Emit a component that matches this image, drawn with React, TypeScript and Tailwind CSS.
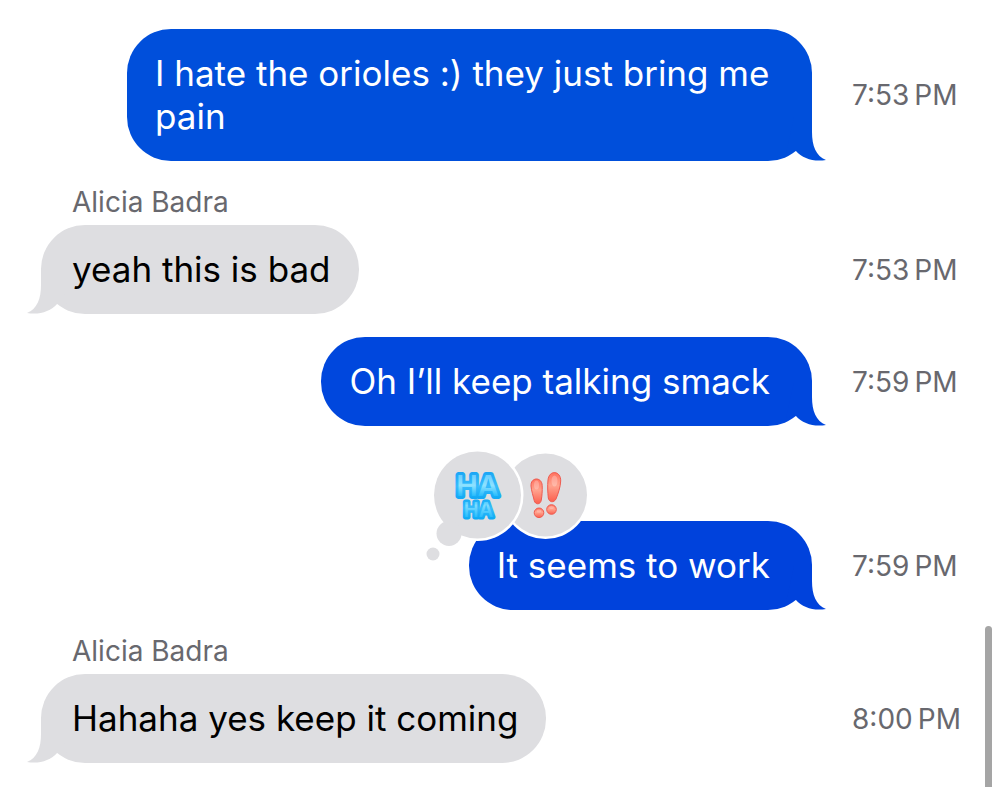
import type { ReactNode } from "react";

type Side = "sent" | "received";

interface Message {
  id: number;
  side: Side;
  text: string;
  time: string;
  author?: string;
  tone: string;
  reacted?: boolean;
}

const messages: Message[] = [
  {
    id: 1,
    side: "sent",
    text: "I hate the orioles :) they just bring me pain",
    time: "7:53\u202fPM",
    tone: "bg-[#004fdb] text-[#004fdb]",
  },
  {
    id: 2,
    side: "received",
    author: "Alicia Badra",
    text: "yeah this is bad",
    time: "7:53\u202fPM",
    tone: "bg-[#dedee1] text-[#dedee1]",
  },
  {
    id: 3,
    side: "sent",
    text: "Oh I’ll keep talking smack",
    time: "7:59\u202fPM",
    tone: "bg-[#0047dd] text-[#0047dd]",
  },
  {
    id: 4,
    side: "sent",
    text: "It seems to work",
    time: "7:59\u202fPM",
    tone: "bg-[#0042dc] text-[#0042dc]",
    reacted: true,
  },
  {
    id: 5,
    side: "received",
    author: "Alicia Badra",
    text: "Hahaha yes keep it coming",
    time: "8:00\u202fPM",
    tone: "bg-[#dedee1] text-[#dedee1]",
  },
];

function Tail({ side }: { side: Side }) {
  return (
    <svg
      aria-hidden="true"
      viewBox="0 0 46 44"
      className={
        side === "sent"
          ? "absolute -right-[14px] bottom-0 h-11 w-[46px]"
          : "absolute -left-[14px] bottom-0 h-11 w-[46px] -scale-x-100"
      }
    >
      <path
        d="M14 0H32V15C32 29 36 39 46 43C34 45 23 42 15.500 33.500L6 36Z"
        fill="currentColor"
      />
    </svg>
  );
}

function Reactions() {
  return (
    <svg
      role="img"
      aria-label="Reactions: haha and emphasis"
      viewBox="425 445 166 120"
      className="absolute -left-11 -top-[76px] h-[120px] w-[166px]"
    >
      <defs>
        <linearGradient id="aqua" gradientUnits="userSpaceOnUse" x1="0" y1="472" x2="0" y2="520">
          <stop offset="0" stopColor="#1ba6f5" />
          <stop offset="0.3" stopColor="#38bcfc" />
          <stop offset="0.54" stopColor="#12a9f5" />
          <stop offset="0.75" stopColor="#38bcfc" />
          <stop offset="1" stopColor="#08a8f4" />
        </linearGradient>
        <linearGradient id="gloss" gradientUnits="userSpaceOnUse" x1="0" y1="472" x2="0" y2="520">
          <stop offset="0" stopColor="#62c8ff" />
          <stop offset="0.28" stopColor="#8ee2ff" />
          <stop offset="0.52" stopColor="#1cb8fd" />
          <stop offset="0.7" stopColor="#7edcff" />
          <stop offset="1" stopColor="#10b4fc" />
        </linearGradient>
        <linearGradient id="coral" x1="0" y1="0" x2="0" y2="1">
          <stop offset="0" stopColor="#ff725f" />
          <stop offset="0.45" stopColor="#ffa38e" />
          <stop offset="1" stopColor="#fc604f" />
        </linearGradient>
      </defs>
      <circle cx="545.500" cy="495" r="44" fill="white" />
      <circle cx="545.500" cy="495" r="41.500" fill="#dedee1" />
      <circle cx="477.500" cy="495" r="46" fill="white" />
      <circle cx="477.500" cy="495" r="43.500" fill="#dedee1" />
      <circle cx="449" cy="533.500" r="12.500" fill="#dedee1" />
      <circle cx="433" cy="554" r="6.500" fill="#dedee1" />
      <text
        fontFamily="Inter, sans-serif"
        fontWeight="600"
        textAnchor="middle"
        strokeLinejoin="round"
        paintOrder="stroke"
        fill="url(#gloss)"
        stroke="url(#aqua)"
        strokeWidth="6"
      >
        <tspan x="477.500" y="496" fontSize="29">HA</tspan>
        <tspan x="478.500" y="517" fontSize="20" strokeWidth="5">HA</tspan>
      </text>
      <g fill="url(#coral)" stroke="#ee5b50" strokeWidth="1">
        <path d="M531 486C530.400 477 541.800 476.500 542.200 485.500C542.400 491 542 496 541.300 500C540.500 505 535.200 505 534.200 500.500C533.200 496 531.400 491 531 486Z" />
        <path d="M548 480C549 469.500 561 470.500 560.700 481C560.500 487 558 494 556 499C554 503 549 502.500 548.300 498C547.700 492 547.400 486 548 480Z" />
        <circle cx="539" cy="512.800" r="4.800" />
        <circle cx="551.500" cy="509.500" r="4.800" />
      </g>
      <g fill="white" opacity="0.250">
        <ellipse cx="536.500" cy="485" rx="2.500" ry="4.500" />
        <ellipse cx="554.500" cy="481" rx="3" ry="5.500" />
        <ellipse cx="539" cy="511" rx="2.500" ry="1.500" />
        <ellipse cx="551.500" cy="507.500" rx="2.500" ry="1.500" />
      </g>
    </svg>
  );
}

function Bubble({ message, children }: { message: Message; children?: ReactNode }) {
  const sent = message.side === "sent";
  return (
    <div
      className={`relative max-w-[685px] rounded-[44px] py-[23px] ${
        sent ? "pl-7 pr-[42px]" : "pl-[31px] pr-7"
      } ${message.tone}`}
    >
      <Tail side={message.side} />
      <p className={`relative text-[35px] leading-[43px] ${sent ? "text-white" : "text-black"}`}>
        {message.text}
      </p>
      {children}
    </div>
  );
}

export default function App() {
  return (
    <main className="relative min-h-screen overflow-hidden bg-white font-['Inter',sans-serif]">
      <ol className="flex flex-col gap-[23px] pt-[29px] pr-[42px] pb-6 pl-[41px]">
        {messages.map((message) => (
          <li key={message.id} className={message.reacted ? "pt-[72px]" : ""}>
            {message.author && (
              <h2 className="mb-[5px] pl-[31px] text-[28px] leading-9 text-[#68686e]">
                {message.author}
              </h2>
            )}
            <div className="flex items-center gap-10">
              <div
                className={`flex min-w-0 flex-1 ${
                  message.side === "sent" ? "justify-end" : "justify-start"
                }`}
              >
                <Bubble message={message}>{message.reacted && <Reactions />}</Bubble>
              </div>
              <time className="w-[106px] shrink-0 whitespace-nowrap text-[28px] leading-9 text-[#68686e]">
                {message.time}
              </time>
            </div>
          </li>
        ))}
      </ol>
      <div
        aria-hidden="true"
        className="absolute top-[626px] right-2 -bottom-2 w-[7px] rounded-full bg-[#a5a5a5]"
      />
    </main>
  );
}
